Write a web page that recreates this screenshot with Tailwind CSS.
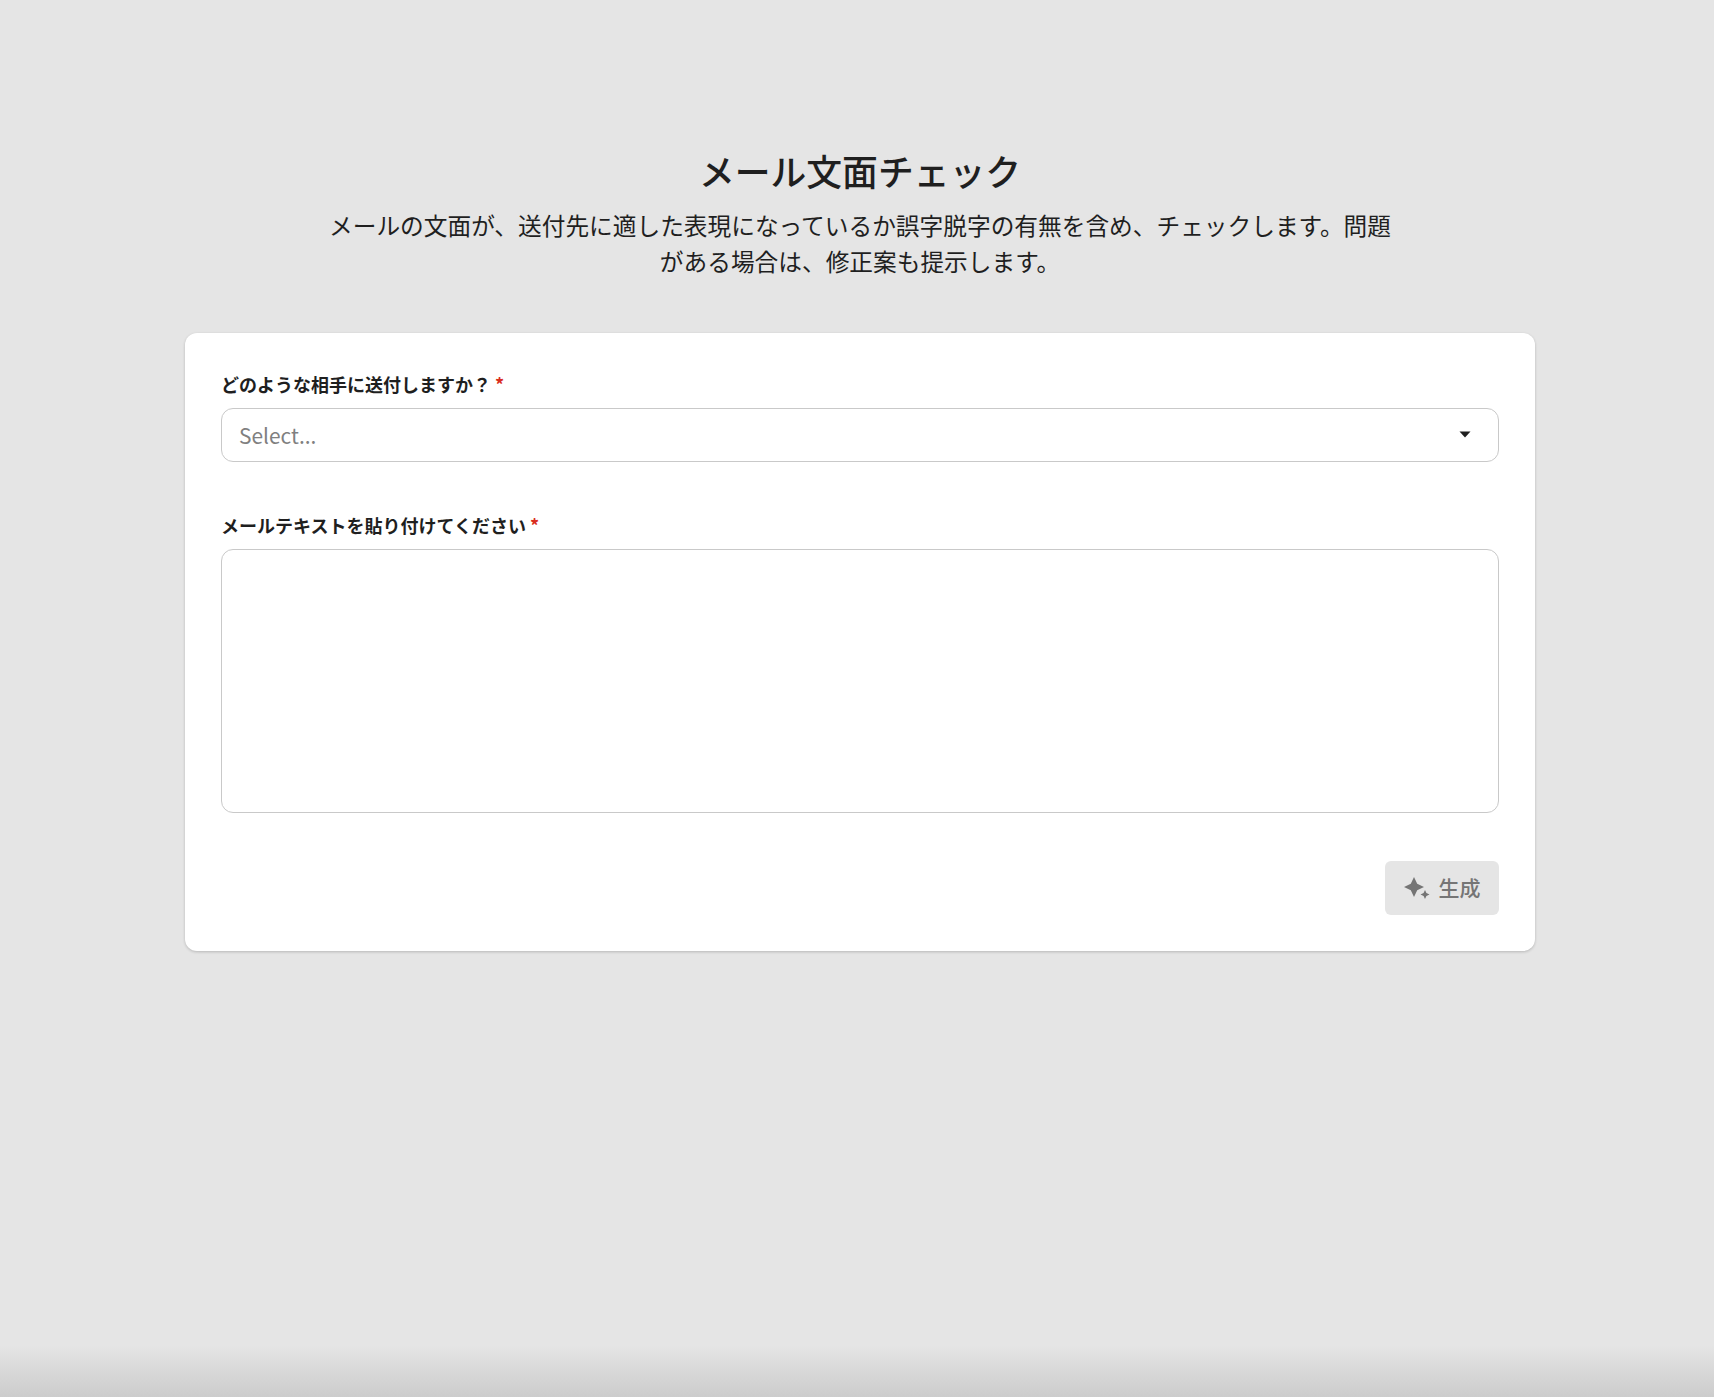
<!DOCTYPE html>
<html lang="ja">
<head>
<meta charset="utf-8">
<title>メール文面チェック</title>
<script src="https://cdn.jsdelivr.net/npm/@tailwindcss/browser@4"></script>
</head>
<body class="bg-[#e5e5e5] font-['Noto_Sans_CJK_JP','Noto_Sans',sans-serif] text-[#1f1f1f]">
<div class="relative h-[1397px] w-full overflow-hidden flex flex-col items-center pt-[145px] pl-[6px]">
  <h1 class="text-[35.8px] leading-[50px] font-medium text-center">メール文面チェック</h1>
  <p class="mt-[12px] w-[1080px] text-center text-[23.7px] leading-[36px]">メールの文面が、送付先に適した表現になっているか誤字脱字の有無を含め、チェックします。問題<br>がある場合は、修正案も提示します。</p>
  <main class="mt-[54px] w-[1350px] h-[618px] bg-white rounded-[12px] shadow-[0_1px_3px_rgba(0,0,0,0.2)] p-[36px] flex flex-col">
    <label class="block text-[18px] leading-[26px] font-bold h-[39px] pt-[2px]">どのような相手に送付しますか？ <span class="text-[#d92d20]">*</span></label>
    <div class="h-[54px] rounded-[12px] border border-[#c9c9c9] flex items-center justify-between pl-[17px] pr-[27px]">
      <span class="text-[20.9px] text-[#808080] mt-[1px]">Select...</span>
      <svg class="w-[12px] h-[7px] -mt-[1px]" viewBox="0 0 12 7"><path d="M0.5 0.5H11.5L6 6.5Z" fill="#1f1f1f"/></svg>
    </div>
    <label class="block mt-[49px] text-[18px] leading-[26px] font-bold h-[38px] pt-[1px]">メールテキストを貼り付けてください <span class="text-[#d92d20]">*</span></label>
    <div class="h-[264px] rounded-[12px] border border-[#c9c9c9]"></div>
    <div class="mt-auto flex justify-end">
      <button class="h-[54px] w-[114px] rounded-[6px] bg-[#e5e5e5] flex items-center justify-center gap-[9px] text-[#757575] text-[21px] font-medium">
        <svg class="w-[26px] h-[23px]" viewBox="0 0 26 23"><path d="M10 0 L13.2 6.8 L20 10 L13.2 13.2 L10 20 L6.8 13.2 L0 10 L6.8 6.8Z" fill="#757575"/><path d="M21 13 L22.4 16.1 L25.5 17.5 L22.4 18.9 L21 22 L19.6 18.9 L16.5 17.5 L19.6 16.1Z" fill="#757575"/></svg>
        <span>生成</span>
      </button>
    </div>
  </main>
  <div class="absolute left-0 right-0 bottom-0 h-[52px] bg-gradient-to-b from-[#e5e5e5] to-[#cccccc]"></div>
</div>
</body>
</html>
